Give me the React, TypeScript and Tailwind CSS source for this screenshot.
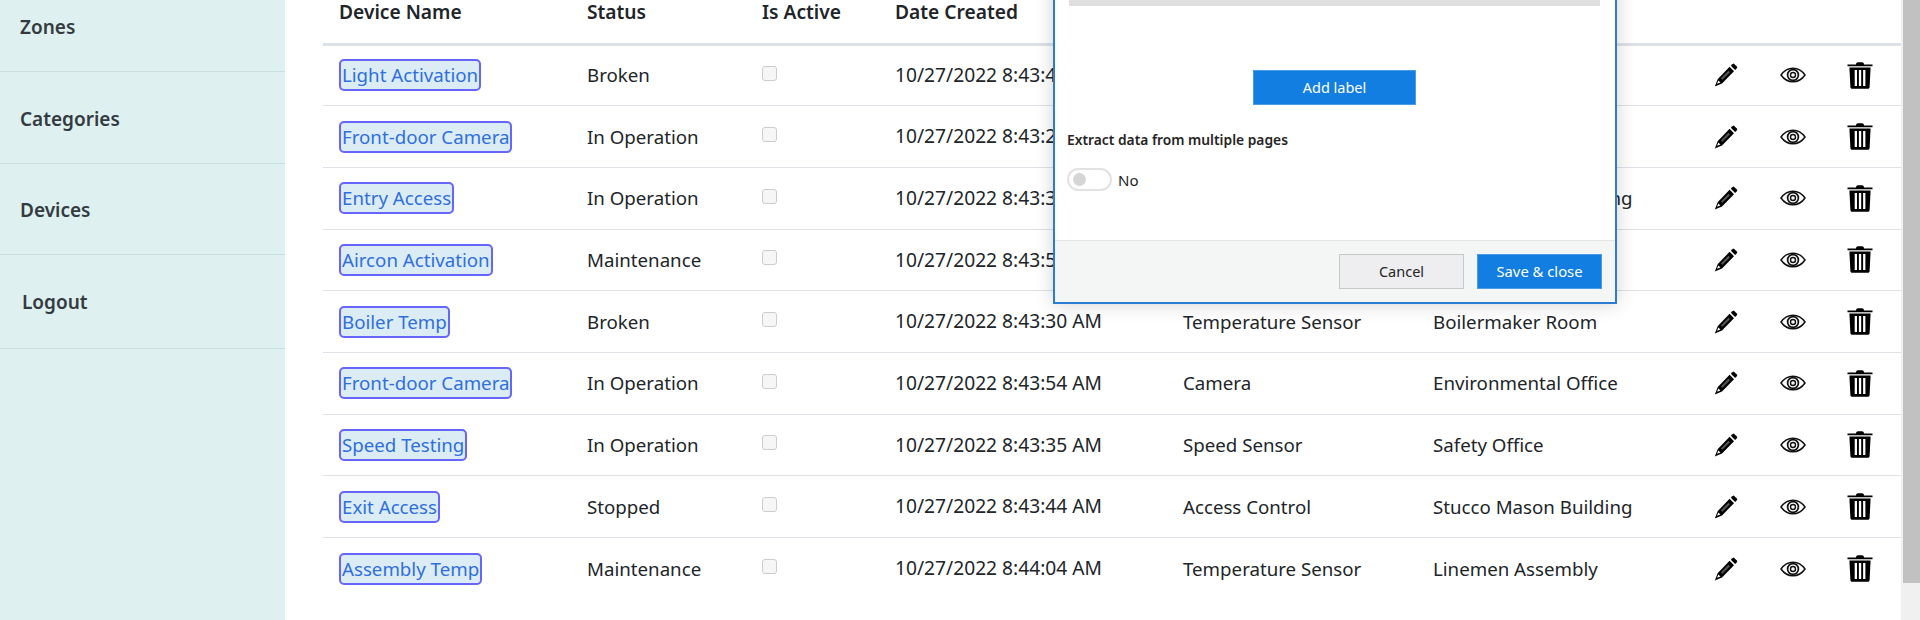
const devices = [
  { name: 'Light Activation', status: 'Broken', date: '10/27/2022 8:43:46 AM', type: 'Light Sensor', place: 'Main Office' },
  { name: 'Front-door Camera', status: 'In Operation', date: '10/27/2022 8:43:24 AM', type: 'Camera', place: 'Reception Office' },
  { name: 'Entry Access', status: 'In Operation', date: '10/27/2022 8:43:38 AM', type: 'Access Control', place: 'Stucco Mason Building' },
  { name: 'Aircon Activation', status: 'Maintenance', date: '10/27/2022 8:43:50 AM', type: 'Temperature Sensor', place: 'Linemen Assembly' },
  { name: 'Boiler Temp', status: 'Broken', date: '10/27/2022 8:43:30 AM', type: 'Temperature Sensor', place: 'Boilermaker Room' },
  { name: 'Front-door Camera', status: 'In Operation', date: '10/27/2022 8:43:54 AM', type: 'Camera', place: 'Environmental Office' },
  { name: 'Speed Testing', status: 'In Operation', date: '10/27/2022 8:43:35 AM', type: 'Speed Sensor', place: 'Safety Office' },
  { name: 'Exit Access', status: 'Stopped', date: '10/27/2022 8:43:44 AM', type: 'Access Control', place: 'Stucco Mason Building' },
  { name: 'Assembly Temp', status: 'Maintenance', date: '10/27/2022 8:44:04 AM', type: 'Temperature Sensor', place: 'Linemen Assembly' },
];

const PencilIcon = () => (
  <svg width="24" height="24" viewBox="0 0 24 24" className="text-black">
    <path d="M18.400 1.200l1.300-.8 3.700 3.700-.8 1.300-1.500 1.500-4.200-4.200z" fill="currentColor" />
    <path d="M15.600 3.800l4.400 4.400L8 20.400l-7.200 3 3-7.400z" fill="currentColor" />
    <path d="M4.400 17.400l2 2-3.400 1.400z" fill="#fff" />
    <path d="M14.500 7.800l1.400 1.400-7.600 7.600-1.400-1.400z" fill="#fff" opacity="0.35" />
  </svg>
);

const EyeIcon = () => (
  <svg width="26" height="16" viewBox="0 0 26 16" fill="none" stroke="currentColor" className="text-[#111]">
    <path d="M1 8c3-4.300 7-6.800 12-6.800S22 3.700 25 8c-3 4.300-7 6.800-12 6.800S4 12.300 1 8z" strokeWidth="1.500" />
    <circle cx="13" cy="8" r="5.400" strokeWidth="1.700" />
    <circle cx="13" cy="8" r="2.500" strokeWidth="1.400" />
  </svg>
);

const TrashIcon = () => (
  <svg width="26" height="27" viewBox="0 0 26 27" className="text-black">
    <path d="M9 2.500C9 1 10 .3 11 .3h4c1 0 2 .7 2 2.200h8.500v1.700H.5V2.500z" fill="currentColor" />
    <path d="M2.400 5.600h21.200L22.600 25c-.1 1-.8 1.800-1.800 1.800H5.200c-1 0-1.700-.8-1.800-1.800z" fill="currentColor" />
    <rect x="7.700" y="8" width="2.300" height="16" fill="#fff" />
    <rect x="11.900" y="8" width="2.300" height="16" fill="#fff" />
    <rect x="16.100" y="8" width="2.300" height="16" fill="#fff" />
  </svg>
);

export default function App() {
  return (
    <div className="relative flex h-[620px] w-[1920px] overflow-hidden bg-white font-['Noto_Sans',sans-serif] text-[#212529]">
      <aside className="w-[285px] shrink-0 bg-[#def1f0] text-[19px] font-semibold text-[#343a40]">
        <div className="flex h-[72px] items-start border-b border-[#c9dedd] pl-5 pt-[13px]">Zones</div>
        <div className="flex h-[92px] items-center border-b border-[#c9dedd] pl-5 pt-[3px]">Categories</div>
        <div className="flex h-[91px] items-center border-b border-[#c9dedd] pl-5 pt-[2px]">Devices</div>
        <div className="flex h-[94px] items-center border-b border-[#c9dedd] pl-[22px] pt-px">Logout</div>
      </aside>

      <main className="flex-1 pl-[38px]">
        <table className="w-[1578px] table-fixed border-collapse text-left text-[18.7px]">
          <thead>
            <tr className="h-[44px] border-b-[3px] border-[#dee2e6] align-top text-[19.2px] leading-[24px]">
              <th className="w-[248px] pl-4 font-semibold">Device Name</th>
              <th className="w-[175px] pl-4 font-semibold">Status</th>
              <th className="w-[133px] pl-4 font-semibold">Is Active</th>
              <th className="w-[288px] pl-4 font-semibold">Date Created</th>
              <th className="w-[250px] pl-4 font-semibold">Type</th>
              <th className="w-[275px] pl-4 font-semibold">Location</th>
              <th className="w-[67px]"></th>
              <th className="w-[67px]"></th>
              <th></th>
            </tr>
          </thead>
          <tbody>
            {devices.map((d, i) => (
              <tr key={i} className="h-[61.7px] border-b border-[#dee2e6] last:border-b-0">
                <td className="pl-4">
                  <a className="inline-block h-8 rounded-[5px] border-2 border-[#6666ff] bg-[#dcecf4] px-px leading-[27px] text-[#2f6fe0]">{d.name}</a>
                </td>
                <td className="pl-4">{d.status}</td>
                <td className="pl-4">
                  <div className="mb-1 h-[15px] w-[15px] rounded-[3px] border border-[#cccccc] bg-[#f6f6f6]"></div>
                </td>
                <td className="pl-4 text-[19.2px]">{d.date}</td>
                <td className="pl-4">{d.type}</td>
                <td className="pl-4">{d.place}</td>
                <td><div className="flex justify-center"><PencilIcon /></div></td>
                <td><div className="flex justify-center"><EyeIcon /></div></td>
                <td className="pr-2"><div className="flex justify-center"><TrashIcon /></div></td>
              </tr>
            ))}
          </tbody>
        </table>
      </main>

      {/* dialog sits over the table */}
      <div className="absolute left-[1053px] top-[-40px] flex h-[344px] w-[564px] flex-col border-2 border-[#2b7cd3] bg-white text-[#252423] shadow-[0_0_18px_rgba(0,0,0,0.18)]">
        <div className="flex-1 pl-[14px] pr-[15px]">
          <div className="h-[44px] bg-[#e0e0e0]"></div>
          <div className="mt-[64px] flex justify-center">
            <button className="h-[35px] w-[163px] border border-[#4a9be8] bg-[#127ee2] text-[14.500px] text-white">Add label</button>
          </div>
          <div className="-ml-0.5 mt-[25px] text-[13.8px] font-semibold">Extract data from multiple pages</div>
          <div className="-ml-0.5 mt-[17px] flex items-center gap-[6px]">
            <div className="flex h-[23px] w-[45px] items-center rounded-full border-2 border-[#e2e2e2] pl-[4px]">
              <div className="h-[13px] w-[13px] rounded-full bg-[#d6d6d6]"></div>
            </div>
            <span className="pt-px text-[15px]">No</span>
          </div>
        </div>
        <div className="flex h-[62px] items-start justify-end gap-[13px] border-t border-[#e3e5e5] bg-[#f4f5f5] pr-[13px] pt-[13px]">
          <button className="h-[35px] w-[125px] border border-[#c8c8c8] bg-[#eeeef0] text-[14.500px]">Cancel</button>
          <button className="h-[35px] w-[125px] border border-[#4a9be8] bg-[#127ee2] text-[14.800px] text-white">Save &amp; close</button>
        </div>
      </div>

      {/* scrollbar */}
      <div className="absolute right-0 top-0 h-full w-[19px] bg-[#f0f0f0]">
        <div className="ml-0.5 h-[583px] w-[17px] bg-[#c1c1c1]"></div>
      </div>
    </div>
  );
}
